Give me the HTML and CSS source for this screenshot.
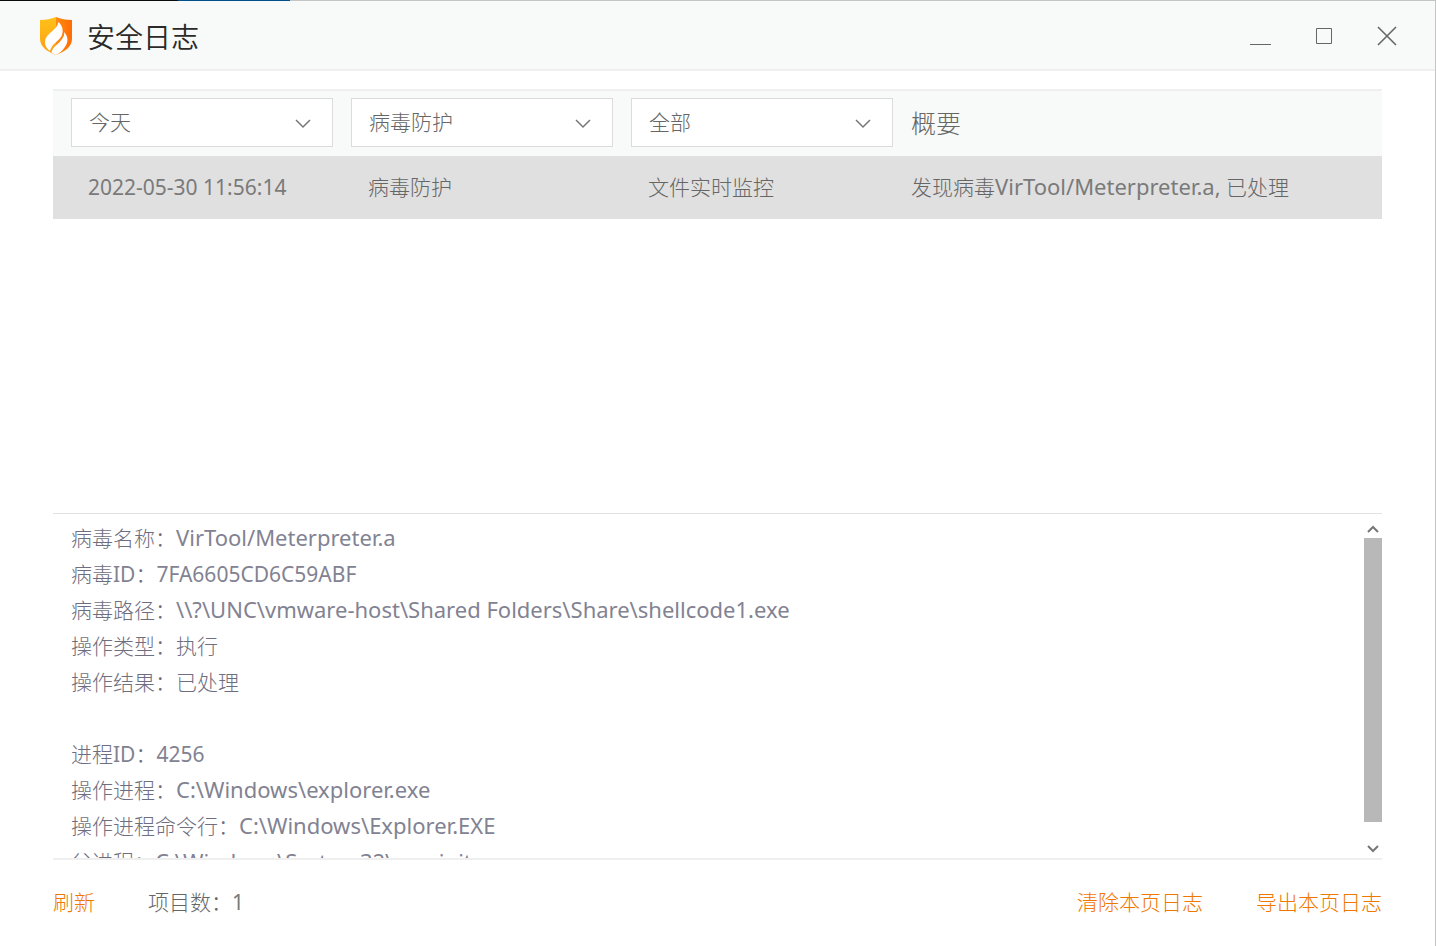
FILE: index.html
```html
<!DOCTYPE html>
<html lang="zh-CN">
<head>
  <meta charset="UTF-8">
  <meta name="viewport" content="width=device-width, initial-scale=1.0">
  <link rel="stylesheet" href="styles.css">
  <title>安全日志</title>
</head>
<body>

  <div class="window">
    <header class="titlebar">
      <svg class="logo" viewBox="0 0 34 40" aria-hidden="true">
        <defs>
          <linearGradient id="left" x1="0" y1="0" x2="0" y2="1">
            <stop offset="0" stop-color="#ffc21a"/>
            <stop offset="1" stop-color="#ff9c12"/>
          </linearGradient>
          <linearGradient id="right" x1="0" y1="0" x2="1" y2="0">
            <stop offset="0" stop-color="#ff8c12"/>
            <stop offset="1" stop-color="#ff6c05"/>
          </linearGradient>
        </defs>
        <path d="M17 1C12 3 7 4 1 4v19c0 8 8 13 16 16z" fill="url(#left)"/>
        <path d="M17 1c5 2 10 3 16 3v19c0 8-8 13-16 16z" fill="url(#right)"/>
        <path d="M19.5 6c4 4 5 8 3.5 13-1.5 5-10 8-12 16C7 32 5 28 6.500 23 8.500 17 18 14 19.500 6z" fill="#fff"/>
        <path d="M25 16c5 5 4 11 0.500 15.500-2 3-5 5.500-8.500 7.500l-4.500-2.500c1-6 7.500-8.500 10.500-13.500 2-3 2.500-4 2-7z" fill="#fff"/>
      </svg>
      <h1>安全日志</h1>
      <div class="window-buttons">
        <button type="button" aria-label="最小化">
          <svg viewBox="0 0 22 22"><path d="M1 19.5h21"/></svg>
        </button>
        <button type="button" aria-label="最大化">
          <svg viewBox="0 0 22 22"><path d="M3.5 3.5h15v15h-15z"/></svg>
        </button>
        <button type="button" aria-label="关闭">
          <svg viewBox="0 0 22 22"><path class="cross" d="M1 2l18 18M19 2L1 20"/></svg>
        </button>
      </div>
    </header>

    <main>
      <div class="log">
        <table>
          <thead>
            <tr>
              <th class="filter">
                <div class="dropdown">
                  <select aria-label="时间">
                    <option>今天</option>
                  </select>
                  <svg viewBox="0 0 16 10"><path d="M1 1l7 7 7-7"/></svg>
                </div>
              </th>
              <th class="filter">
                <div class="dropdown">
                  <select aria-label="类别">
                    <option>病毒防护</option>
                  </select>
                  <svg viewBox="0 0 16 10"><path d="M1 1l7 7 7-7"/></svg>
                </div>
              </th>
              <th class="filter">
                <div class="dropdown">
                  <select aria-label="功能">
                    <option>全部</option>
                  </select>
                  <svg viewBox="0 0 16 10"><path d="M1 1l7 7 7-7"/></svg>
                </div>
              </th>
              <th class="summary">概要</th>
            </tr>
          </thead>
          <tbody>
            <tr>
              <td><span class="number">2022-05-30 11:56:14</span></td>
              <td>病毒防护</td>
              <td>文件实时监控</td>
              <td class="summary">发现病毒<span class="name">VirTool/Meterpreter.a,</span> 已处理</td>
            </tr>
          </tbody>
        </table>
      </div>

      <section class="details">
        <div class="details-text">
          <p>病毒名称：<span class="name">VirTool/Meterpreter.a</span></p>
          <p>病毒<span class="number">ID</span>：<span class="number">7FA6605CD6C59ABF</span></p>
          <p>病毒路径：<span class="name">\\?\UNC\vmware-host\Shared Folders\Share\shellcode1.exe</span></p>
          <p>操作类型：执行</p>
          <p>操作结果：已处理</p>
          <br>
          <p>进程<span class="number">ID</span>：<span class="number">4256</span></p>
          <p>操作进程：<span class="name">C:\Windows\explorer.exe</span></p>
          <p>操作进程命令行：<span class="name">C:\Windows\Explorer.EXE</span></p>
          <p>父进程：<span class="name">C:\Windows\System32\userinit.exe</span></p>
        </div>
        <div class="scrollbar">
          <button type="button" aria-label="向上滚动">
            <svg viewBox="0 0 12 8"><path d="M1 7l5-5 5 5"/></svg>
          </button>
          <div class="track"><div class="thumb"></div></div>
          <button type="button" aria-label="向下滚动">
            <svg viewBox="0 0 12 8"><path d="M1 1l5 5 5-5"/></svg>
          </button>
        </div>
      </section>
    </main>

    <footer>
      <a href="#">刷新</a>
      <span class="count">项目数：<span class="number">1</span></span>
      <a href="#" class="clear">清除本页日志</a>
      <a href="#">导出本页日志</a>
    </footer>
  </div>

</body>
</html>
```
FILE: styles.css
```css
* {
  box-sizing: border-box;
}

body {
  margin: 0;
  font-family: "Noto Sans", "Noto Sans CJK SC", sans-serif;
  font-size: 21px;
  font-weight: 300;
  line-height: 36px;
  color: #666;
  background-color: #fff;
}

button {
  display: flex;
  align-items: center;
  justify-content: center;
  padding: 0;
  border: none;
  background: none;
  cursor: pointer;
}

svg {
  fill: none;
  stroke: #777;
}

.number,
.name {
  font-weight: 400;
  color: #7a7a7a;
}

.name {
  font-size: 22px;
  line-height: 1;
}

.window {
  display: flex;
  flex-direction: column;
  height: 100vh;
  border-right: 1px solid #c4c4c4;
}

/* the desktop shows through above the title bar */
.window::before {
  content: "";
  height: 1px;
  background: linear-gradient(to right, #0a0a0a 178px, #00508c 178px, #00508c 290px, #c4c4c4 290px);
}

.titlebar {
  display: flex;
  align-items: center;
  height: 70px;
  padding: 2px 36px 0 39px;
  background-color: #f8faf9;
  border-bottom: 2px solid #efefef;
}

.logo {
  width: 34px;
  height: 40px;
  stroke: none;
}

h1 {
  margin: 2px 0 0 14px;
  font-size: 28px;
  font-weight: 350;
  color: #2a2a2a;
}

.window-buttons {
  display: flex;
  gap: 42px;
  margin-left: auto;
}

.window-buttons svg {
  width: 22px;
  height: 22px;
  stroke: #666;
}

.window-buttons .cross {
  stroke-width: 1.6;
}

main {
  flex: 1;
  display: flex;
  flex-direction: column;
  min-height: 0;
  margin: 18px 53px 0;
}

.log {
  flex: 1;
}

table {
  width: 100%;
  table-layout: fixed;
  border-collapse: collapse;
}

thead {
  background-color: #f8faf9;
  box-shadow: inset 0 2px #efefef;
}

th {
  padding: 9px 0 9px 18px;
  font-weight: 300;
  text-align: left;
}

.filter {
  width: 280px;
}

th.summary {
  font-size: 25px;
}

.dropdown {
  position: relative;
}

.dropdown svg {
  position: absolute;
  top: 21px;
  right: 22px;
  width: 16px;
  height: 10px;
  stroke-width: 1.5;
  pointer-events: none;
}

select {
  display: block;
  width: 100%;
  height: 49px;
  padding: 0 17px 2px;
  font: inherit;
  color: inherit;
  background-color: #fff;
  border: 1px solid #dcdcdc;
  border-radius: 0;
  appearance: none;
}

tbody tr {
  background-color: #e0e0e0;
}

td {
  height: 63px;
  padding: 0 0 2px 35px;
}

td.summary {
  padding-left: 18px;
}

.details {
  display: flex;
  height: 347px;
  padding-top: 6px;
  color: #6e6e80;
  border-top: 1px solid #e2e2e2;
  border-bottom: 2px solid #efefef;
}

.details-text {
  flex: 1;
  padding-left: 18px;
  overflow: hidden;
}

.details-text p {
  margin: 0;
}

.details-text span {
  color: #828292;
}

.scrollbar {
  display: flex;
  flex-direction: column;
  width: 18px;
}

.scrollbar button {
  height: 18px;
}

.scrollbar svg {
  width: 12px;
  height: 8px;
  stroke-width: 2;
}

.track {
  flex: 1;
}

.thumb {
  height: 94%;
  background-color: #b8b8b8;
}

footer {
  display: flex;
  align-items: center;
  height: 86px;
  padding: 0 53px 2px;
}

footer a {
  color: #f07800;
  text-decoration: none;
}

.count {
  margin-left: 53px;
}

.clear {
  margin: 0 53px 0 auto;
}
```
